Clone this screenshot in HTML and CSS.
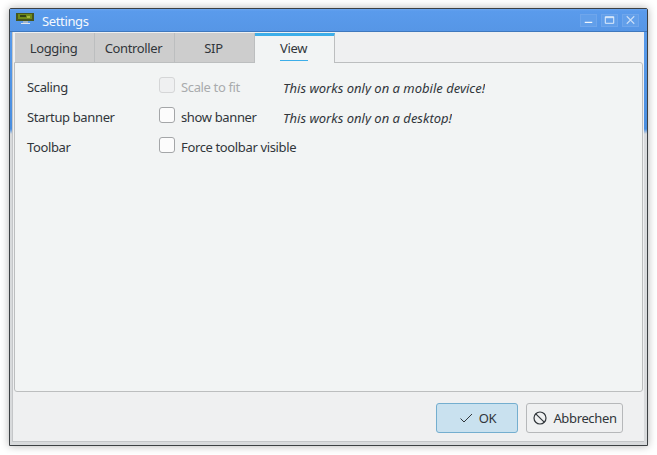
FILE: index.html
```html
<!DOCTYPE html>
<html lang="en">
<head>
<meta charset="utf-8">
<title>Settings</title>
<link rel="stylesheet" href="styles.css">
</head>
<body>
<div class="window">
  <header class="titlebar">
    <svg class="app-icon" width="20" height="14" viewBox="0 0 20 14">
      <rect x="0" y="0" width="18" height="8" fill="#46561f"/>
      <rect x="2" y="1" width="14" height="5" fill="#6f8a1c"/>
      <rect x="4" y="2" width="6" height="2" fill="#33421a"/>
      <rect x="11" y="3" width="3" height="2" fill="#a3b93c"/>
      <rect x="7" y="8" width="5" height="2" fill="#9fb4cc"/>
      <rect x="5" y="10" width="9" height="1" fill="#dfe6ee"/>
    </svg>
    <span class="title">Settings</span>
    <div class="controls">
      <span class="ctl"><svg width="16" height="12" viewBox="0 0 16 12"><path d="M4 8.5h8" stroke="#fff" stroke-width="1.2"/></svg></span>
      <span class="ctl"><svg width="16" height="12" viewBox="0 0 16 12"><path d="M3.5 2.5h9v7h-9z M3.5 3.5h9" fill="none" stroke="#eaf2fc" stroke-width="1"/></svg></span>
      <span class="ctl"><svg width="16" height="12" viewBox="0 0 16 12"><path d="M4 2l8 8M12 2l-8 8" stroke="#c9def8" stroke-width="1.2"/></svg></span>
    </div>
  </header>
  <div class="client">
    <div class="tabs">
      <div class="tab">Logging</div>
      <div class="tab">Controller</div>
      <div class="tab">SIP</div>
      <div class="tab active"><span class="tab-label">View</span></div>
    </div>
    <main class="panel">
      <div class="row">
        <span class="label">Scaling</span>
        <span class="check disabled"><span class="box"></span><span>Scale to fit</span></span>
        <em class="note">This works only on a mobile device!</em>
      </div>
      <div class="row">
        <span class="label">Startup banner</span>
        <span class="check"><span class="box"></span><span>show banner</span></span>
        <em class="note">This works only on a desktop!</em>
      </div>
      <div class="row">
        <span class="label">Toolbar</span>
        <span class="check wide"><span class="box"></span><span>Force toolbar visible</span></span>
      </div>
    </main>
    <footer class="buttons">
      <button class="btn ok">
        <svg width="16" height="16" viewBox="0 0 16 16"><path d="M2.5 8.5l3.5 3.5 8-8" fill="none" stroke="#31363b" stroke-width="1"/></svg>
        <span>OK</span>
      </button>
      <button class="btn cancel">
        <svg width="16" height="16" viewBox="0 0 16 16"><circle cx="8" cy="8" r="6" fill="none" stroke="#31363b" stroke-width="1.2"/><path d="M3.8 3.8l8.4 8.4" stroke="#31363b" stroke-width="1.2"/></svg>
        <span>Abbrechen</span>
      </button>
    </footer>
  </div>
</div>
</body>
</html>
```
FILE: styles.css
```css
* { box-sizing: border-box; }
html, body { margin: 0; height: 100%; background: #fff; overflow: hidden; }
body {
  padding: 8px 9px 9px 9px;
  font-family: "Noto Sans", sans-serif;
  font-size: 13px;
  letter-spacing: -0.36px;
  color: #31363b;
}
.window {
  width: 639px;
  height: 438px;
  border: 1px solid #3c4043;
  border-radius: 2px 2px 0 0;
  box-shadow: 0 0 8px rgba(0, 0, 0, .3);
  background: linear-gradient(180deg, #5b9ded 0, #4a8edf 120px, #d8dadc 125px, #d8dadc 100%);
  display: flex;
  flex-direction: column;
  padding: 0 3px 3px 2px;
}
.titlebar {
  height: 23px;
  flex: none;
  display: flex;
  align-items: center;
  margin: 0 -3px 0 -2px;
  padding: 0 8px 0 6px;
  background: linear-gradient(180deg, #6ba6f0 0, #5a9bec 2px, #5696e6 100%);
  border-bottom: 1px solid #3f78bd;
  color: #fff;
}
.app-icon { flex: none; margin-top: -1px; }
.title { margin-left: 6px; padding-top: 2px; font-size: 13px; color: #f4f8fd; }
.controls { margin-left: auto; display: flex; gap: 4px; }
.ctl {
  width: 17px;
  height: 13px;
  border: 1px solid #6fa6ec;
  background: #629fea;
  display: flex;
  align-items: center;
  justify-content: center;
}
.client {
  flex: 1;
  min-height: 0;
  background: #eff0f1;
  border: 1px solid #c4c6c8;
  border-top: 0;
  border-right: 0;
  display: flex;
  flex-direction: column;
  padding: 1px 1px 0 1px;
  position: relative;
}
.tabs { display: flex; height: 30px; flex: none; position: relative; z-index: 1; padding-left: 1px; }
.tab {
  width: 80px;
  height: 30px;
  background: #cdcdcd;
  border-right: 1px solid #bcbebf;
  border-bottom: 1px solid #bcbebf;
  display: flex;
  align-items: center;
  justify-content: center;
  padding: 1px 2px 0 0;
}
.tab.active {
  background: #f2f4f4;
  border-top: 3px solid #3daee9;
  border-bottom: 0;
  border-right: 1px solid #bcbebf;
  padding-top: 0;
  align-items: flex-start;
}
.tab-label {
  border-bottom: 1px solid #3daee9;
  line-height: 19px;
  padding: 3px 0 0;
  height: 25px;
  width: 28px;
  text-align: center;
}
.panel {
  flex: 1;
  margin-top: -1px;
  background: #f2f4f4;
  border: 1px solid #bcbebf;
  border-radius: 0 3px 3px 3px;
  padding: 9px 12px 0;
}
.row { display: flex; align-items: center; height: 30px; }
.label { width: 132px; flex: none; }
.check { display: flex; align-items: center; gap: 6px; width: 124px; flex: none; }
.check.wide { width: auto; }
.box {
  width: 16px;
  height: 16px;
  background: #fcfcfc;
  border: 1px solid #a4a6a8;
  border-radius: 3px;
  flex: none;
  margin-bottom: 4px;
}
.disabled { color: #a9abad; }
.disabled .box { background: #eff0f1; border-color: #d5d6d7; }
.note {
  align-self: flex-start;
  height: 16px;
  margin-top: 7px;
  line-height: 18px;
  overflow: hidden;
  font-style: italic;
  letter-spacing: 0;
  color: #31363b;
}
.buttons {
  height: 49px;
  flex: none;
  display: flex;
  justify-content: flex-end;
  align-items: flex-start;
  gap: 8px;
  padding: 11px 20px 0 0;
}
.btn {
  height: 30px;
  font: inherit;
  letter-spacing: inherit;
  color: inherit;
  display: flex;
  align-items: center;
  justify-content: center;
  gap: 5px;
  border-radius: 3px;
  padding: 0;
}
.ok { width: 82px; background: #c9e1ef; border: 1px solid #74aecf; }
.cancel { width: 97px; background: #eff0f1; border: 1px solid #b6b8ba; }
```
